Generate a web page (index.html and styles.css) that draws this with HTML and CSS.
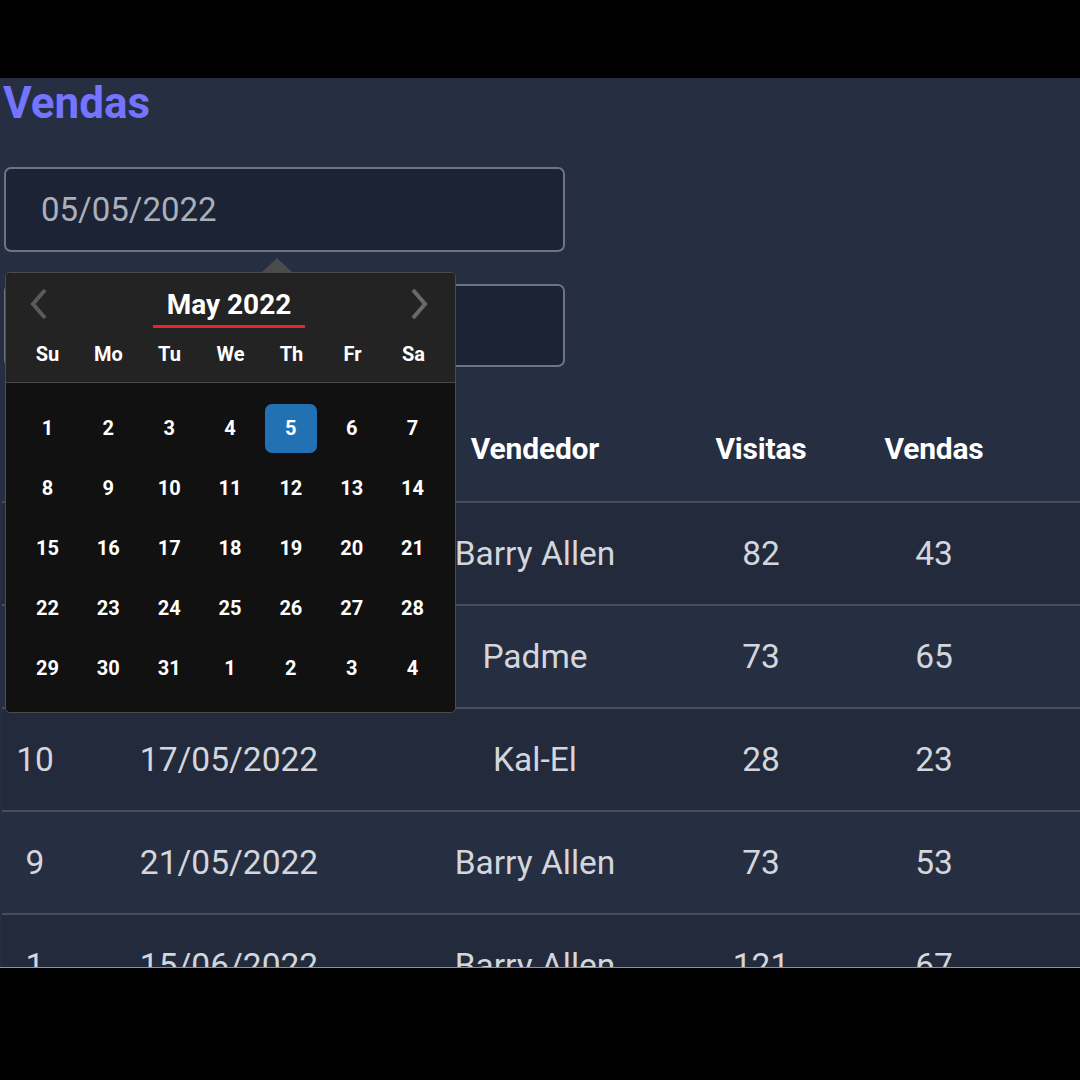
FILE: index.html
```html
<!DOCTYPE html>
<html lang="pt">
<head>
<meta charset="utf-8">
<title>Vendas</title>
<link rel="stylesheet" href="styles.css">
</head>
<body>
<div class="screen">
  <h1 class="title">Vendas</h1>
  <div class="filters">
    <div class="field">05/05/2022</div>
    <div class="field"></div>
  </div>

  <div class="table">
    <div class="row head">
      <div>ID</div><div>Data</div><div>Vendedor</div><div>Visitas</div><div>Vendas</div><div></div>
    </div>
    <div class="row"><div>5</div><div>05/05/2022</div><div>Barry Allen</div><div>82</div><div>43</div><div></div></div>
    <div class="row"><div>7</div><div>10/05/2022</div><div>Padme</div><div>73</div><div>65</div><div></div></div>
    <div class="row"><div>10</div><div>17/05/2022</div><div>Kal-El</div><div>28</div><div>23</div><div></div></div>
    <div class="row"><div>9</div><div>21/05/2022</div><div>Barry Allen</div><div>73</div><div>53</div><div></div></div>
    <div class="row"><div>1</div><div>15/06/2022</div><div>Barry Allen</div><div>121</div><div>67</div><div></div></div>
  </div>

  <div class="picker-arrow"></div>
  <div class="picker">
    <div class="picker-head">
      <div class="month-bar">
        <svg class="nav" width="20" height="34" viewBox="0 0 20 34"><path d="M16 3 L4 17 L16 31" fill="none" stroke="#5a5a5a" stroke-width="4"/></svg>
        <div class="month">May 2022</div>
        <svg class="nav" width="20" height="34" viewBox="0 0 20 34"><path d="M4 3 L16 17 L4 31" fill="none" stroke="#6a6a6a" stroke-width="4"/></svg>
      </div>
      <div class="week">
        <span>Su</span><span>Mo</span><span>Tu</span><span>We</span><span>Th</span><span>Fr</span><span>Sa</span>
      </div>
    </div>
    <div class="days">
      <span>1</span><span>2</span><span>3</span><span>4</span><span class="sel">5</span><span>6</span><span>7</span>
      <span>8</span><span>9</span><span>10</span><span>11</span><span>12</span><span>13</span><span>14</span>
      <span>15</span><span>16</span><span>17</span><span>18</span><span>19</span><span>20</span><span>21</span>
      <span>22</span><span>23</span><span>24</span><span>25</span><span>26</span><span>27</span><span>28</span>
      <span>29</span><span>30</span><span>31</span><span>1</span><span>2</span><span>3</span><span>4</span>
    </div>
  </div>
</div>
</body>
</html>
```

FILE: styles.css
```css
html, body {
  margin: 0;
  padding: 0;
  background: #000;
  font-family: Roboto, "Liberation Sans", sans-serif;
}

.screen {
  position: relative;
  margin-top: 78px;
  height: 889px;
  background: #262e41;
  overflow: hidden;
  border-bottom: 1px solid #8d929c;
  padding-left: 3px;
}

.title {
  margin: 0;
  font-size: 44px;
  line-height: 50px;
  font-weight: 700;
  color: #7474ff;
}

.filters {
  display: flex;
  flex-direction: column;
  gap: 32px;
  margin-top: 39px;
  padding-left: 1px;
}

.field {
  box-sizing: border-box;
  width: 561px;
  height: 85px;
  border: 2px solid #6c7485;
  border-radius: 7px;
  background: #1c2334;
  color: #a9b0bc;
  font-size: 33px;
  line-height: 81px;
  padding-left: 35px;
}

.field + .field {
  height: 83px;
}

.table {
  margin-top: 32px;
  margin-left: -1px;
}

.row {
  display: grid;
  grid-template-columns: 66px 322px 290px 162px 184px 1fr;
  height: 101px;
  align-items: center;
  text-align: center;
  border-bottom: 2px solid #454d5f;
  color: #d3d6dc;
  font-size: 33.5px;
}

.row:nth-child(even) {
  background: #222a3b;
}

.row.head {
  box-sizing: border-box;
  height: 104px;
  padding-bottom: 4px;
  color: #fff;
  font-weight: 700;
  font-size: 30px;
  letter-spacing: -0.2px;
}

/* date picker overlay */
.picker-arrow {
  position: absolute;
  left: 262px;
  top: 180px;
  width: 0;
  height: 0;
  border-left: 15px solid transparent;
  border-right: 15px solid transparent;
  border-bottom: 14px solid #4b4b4b;
}

.picker {
  position: absolute;
  left: 5px;
  top: 194px;
  width: 451px;
  box-sizing: border-box;
  border: 1px solid #4c4c4c;
  border-radius: 5px;
  overflow: hidden;
  background: #111;
  color: #fff;
  font-weight: 700;
}

.picker-head {
  background: #232323;
  height: 110px;
  border-bottom: 1px solid #4a4a4a;
  box-sizing: border-box;
  padding: 0 11px;
}

.month-bar {
  display: flex;
  align-items: center;
  justify-content: space-between;
  height: 62px;
  padding: 0 15px 0 12px;
}

.nav {
  display: block;
}

.month {
  font-size: 28px;
  line-height: 40px;
  padding: 0 14px;
  margin-top: 4px;
  border-bottom: 3px solid #e5262d;
  color: #fff;
}

.week {
  display: grid;
  grid-template-columns: repeat(7, 1fr);
  text-align: center;
  font-size: 20px;
  line-height: 38px;
}

.days {
  display: grid;
  grid-template-columns: repeat(7, 1fr);
  grid-auto-rows: 60px;
  padding: 15px 12px 14px 11px;
  text-align: center;
  font-size: 20px;
}

.days span {
  display: flex;
  align-items: center;
  justify-content: center;
}

.days .sel {
  background: #2271b3;
  border-radius: 7px;
  width: 52px;
  height: 49px;
  justify-self: center;
  align-self: center;
}
```
